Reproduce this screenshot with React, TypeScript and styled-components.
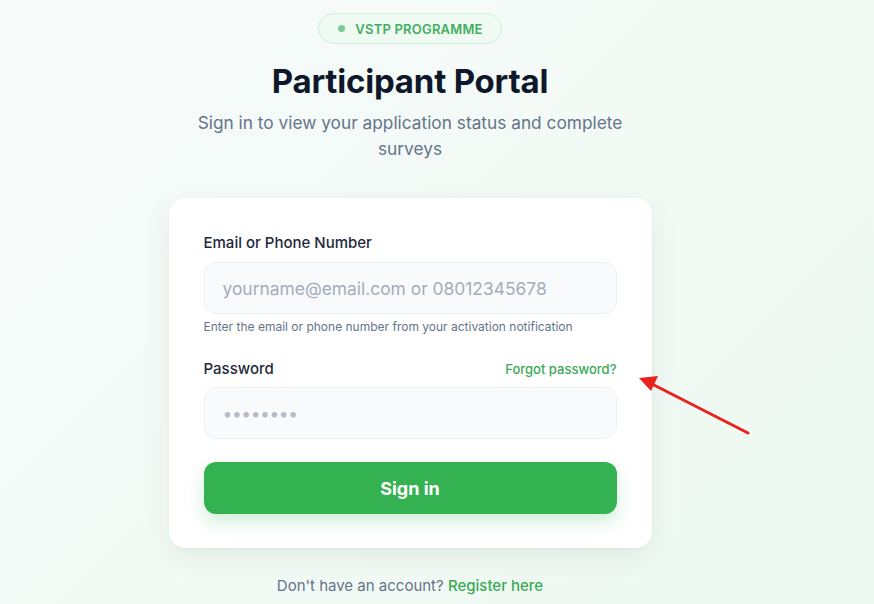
import React, { useState } from 'react'
import styled, { createGlobalStyle } from 'styled-components'

const GlobalStyle = createGlobalStyle`
  html, body {
    margin: 0;
    padding: 0;
  }
  body {
    font-family: Inter, "Noto Sans", "Liberation Sans", sans-serif;
    background: linear-gradient(135deg, #f7fbfa 0%, #f3faf6 50%, #ecf9f0 100%);
    min-height: 604px;
    -webkit-font-smoothing: antialiased;
  }
  * { box-sizing: border-box; }
`

export default function App () {
  const [login, setLogin] = useState('')
  const [password, setPassword] = useState('')

  return (
    <>
      <GlobalStyle />
      <Page>
        <Badge>
          <Dot />
          VSTP PROGRAMME
        </Badge>
        <Title>Participant Portal</Title>
        <Subtitle>Sign in to view your application status and complete surveys</Subtitle>

        <Card onSubmit={e => e.preventDefault()}>
          <Label htmlFor="login">Email or Phone Number</Label>
          <Input
            id="login"
            value={login}
            onChange={e => setLogin(e.target.value)}
            placeholder="yourname@email.com or 08012345678"
          />
          <Hint>Enter the email or phone number from your activation notification</Hint>

          <LabelRow>
            <Label htmlFor="password">Password</Label>
            <Link href="#">Forgot password?</Link>
          </LabelRow>
          <Input
            id="password"
            type="password"
            $dots
            value={password}
            onChange={e => setPassword(e.target.value)}
            placeholder="••••••••"
          />

          <SubmitButton type="submit">Sign in</SubmitButton>
        </Card>

        <Footer>
          Don't have an account? <Link href="#" $size={15}>Register here</Link>
        </Footer>

        <Arrow width="130" height="80" viewBox="0 0 130 80">
          <line x1="118" y1="63" x2="22" y2="14" stroke="#e8231f" strokeWidth="3" strokeLinecap="round" />
          <polygon points="9,8 28,6 21,21" fill="#e8231f" />
        </Arrow>
      </Page>
    </>
  )
}

const Page = styled.div`
  position: relative;
  display: flex;
  flex-direction: column;
  align-items: center;
  padding: 13px 54px 0 0;
  min-height: 604px;
`

const Badge = styled.div`
  display: flex;
  align-items: center;
  gap: 10px;
  height: 31px;
  padding: 0 18px 0 19px;
  border-radius: 999px;
  border: 1px solid #cdeed8;
  background: #eefaf2;
  color: #45ad64;
  font-size: 13px;
  font-weight: 600;
  letter-spacing: 0.2px;
`

const Dot = styled.span`
  width: 7px;
  height: 7px;
  border-radius: 50%;
  background: #7acb96;
`

const Title = styled.h1`
  margin: 18px 0 0;
  font-size: 33px;
  line-height: 38px;
  font-weight: 700;
  color: #0f172a;
  letter-spacing: -0.2px;
`

const Subtitle = styled.p`
  margin: 10px 0 0;
  max-width: 440px;
  text-align: center;
  font-size: 17.3px;
  line-height: 26px;
  color: #64748b;
`

const Card = styled.form`
  display: flex;
  flex-direction: column;
  width: 483px;
  margin-top: 36px;
  padding: 35px 35px 34px;
  background: #ffffff;
  border-radius: 16px;
  box-shadow: 0 10px 30px rgba(15, 40, 30, 0.07), 0 1px 3px rgba(15, 40, 30, 0.04);
`

const Label = styled.label`
  font-size: 15px;
  line-height: 20px;
  font-weight: 500;
  color: #1e293b;
`

const LabelRow = styled.div`
  display: flex;
  justify-content: space-between;
  align-items: center;
  margin-top: 24px;
`

const Input = styled.input<{ $dots?: boolean }>`
  margin-top: ${props => props.$dots ? 8 : 9}px;
  height: 52px;
  width: 100%;
  padding: 0 18px;
  border: 1px solid #edf1f5;
  border-radius: 12px;
  background: #f8fafc;
  font-family: inherit;
  font-size: 17.4px;
  color: #0f172a;
  outline: none;
  letter-spacing: ${props => props.$dots ? '-0.4px' : '0'};

  &::placeholder {
    color: ${props => props.$dots ? '#b4bcc7' : '#a3adba'};
  }
`

const Hint = styled.div`
  margin-top: 5px;
  font-size: 12px;
  line-height: 16px;
  color: #64748b;
`

const Link = styled.a<{ $size?: number }>`
  font-size: ${props => props.$size || 13}px;
  font-weight: 500;
  color: #3aaa55;
  text-decoration: none;
`

const SubmitButton = styled.button`
  margin-top: 23px;
  height: 52px;
  width: 100%;
  border: none;
  border-radius: 12px;
  background: #34b150;
  color: #ffffff;
  font-family: inherit;
  font-size: 18px;
  font-weight: 700;
  cursor: pointer;
  box-shadow: 0 8px 18px rgba(52, 177, 80, 0.22);
`

const Footer = styled.div`
  margin-top: 28px;
  font-size: 15px;
  line-height: 20px;
  color: #64748b;
`

const Arrow = styled.svg`
  position: absolute;
  left: 630px;
  top: 370px;
`
